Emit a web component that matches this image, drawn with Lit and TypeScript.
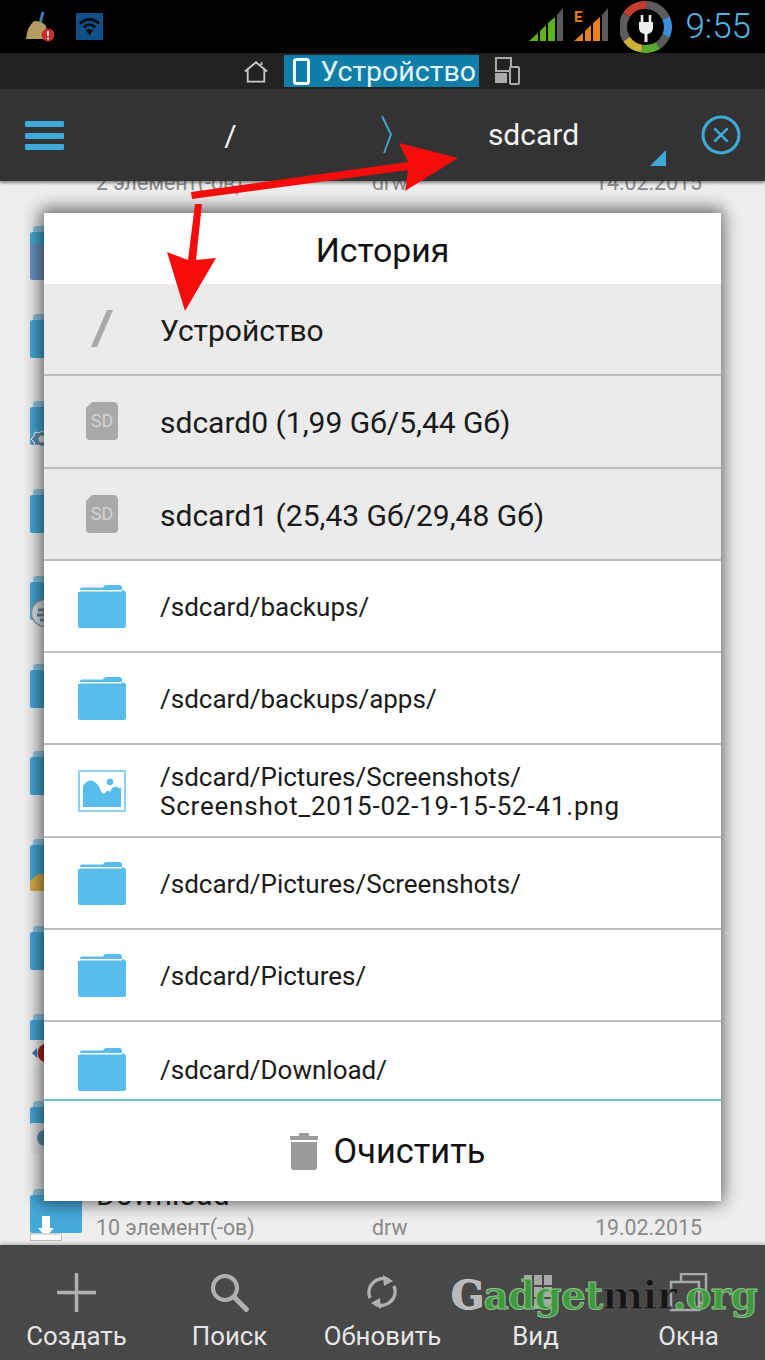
import { LitElement, html, css, svg } from "lit";
import { customElement } from "lit/decorators.js";

const folder = html`<svg viewBox="0 0 48 44" width="48" height="44"><path d="M2 5.5 Q2 3.5 4 3.5 H25 Q26 1 28 1 H41 Q44 1 44 3.5 V6 H2Z" fill="#58bdec"/><path d="M0 8 H2 V7.5 H44 V6 Q48 7 48 9 V42 Q48 44 46 44 H2 Q0 44 0 42Z" fill="#58bdec"/></svg>`;
const sd = html`<svg viewBox="0 0 32 38" width="32" height="38"><path d="M6 0 H27 Q32 0 32 5 V34 Q32 38 28 38 H4 Q0 38 0 34 V6Z" fill="#a9a9a9"/><text x="16" y="25" text-anchor="middle" font-family="Roboto, sans-serif" font-size="18" fill="#d2d2d2">SD</text></svg>`;
const slash = html`<svg viewBox="0 0 24 38" width="24" height="38"><path d="M17 0 H23 L7 37 H1Z" fill="#a9a9a9"/></svg>`;
const image = html`<svg viewBox="0 0 48 42" width="48" height="42"><rect x="1" y="1" width="46" height="40" fill="#fff" stroke="#8ed3ee" stroke-width="2"/><rect x="5" y="5" width="38" height="32" fill="#58bdec"/><path d="M5 16 Q10 9 15 11 Q20 13 23 21 Q25 26 28 22 Q30 19 32 22 Q34 16 39 17 Q42 19 43 17 V5 H5Z" fill="#fff"/><circle cx="32" cy="12" r="3.3" fill="#58bdec"/></svg>`;

const dlgRows = [
  { icon: slash, label: ["Устройство"], cls: "grey big" },
  { icon: sd, label: ["sdcard0 (1,99 Gб/5,44 Gб)"], cls: "grey big" },
  { icon: sd, label: ["sdcard1 (25,43 Gб/29,48 Gб)"], cls: "grey big" },
  { icon: folder, label: ["/sdcard/backups/"], cls: "" },
  { icon: folder, label: ["/sdcard/backups/apps/"], cls: "" },
  { icon: image, label: ["/sdcard/Pictures/Screenshots/", "Screenshot_2015-02-19-15-52-41.png"], cls: "" },
  { icon: folder, label: ["/sdcard/Pictures/Screenshots/"], cls: "" },
  { icon: folder, label: ["/sdcard/Pictures/"], cls: "" },
  { icon: folder, label: ["/sdcard/Download/"], cls: "" },
];

const bgIcon = (badge: unknown = null) => html`<div class="bgicon"><svg viewBox="0 0 52 45" width="52" height="45"><path d="M3 4 Q3 1 6 1 H46 Q49 1 49 4 V8 H3Z" fill="#8fc9e3"/><path d="M0 9 Q0 7 3 7 H49 Q52 7 52 9 V43 Q52 45 50 45 H2 Q0 45 0 43Z" fill="#45a9d8"/></svg>${badge}</div>`;

const badges: Record<number, unknown> = {
  1: html`<svg class="b tall" width="52" height="36" viewBox="0 0 52 36"><path d="M0 0 H52 V34 Q52 36 50 36 H2 Q0 36 0 34Z" fill="#6b93c2"/></svg>`,
  3: html`<svg class="b" width="24" height="23" viewBox="0 0 24 23"><path d="M12 1 l3 2 4-1 1 4 3 3-3 3-1 4-4-1-3 2-3-2-4 1-1-4-3-3 3-3 1-4 4 1Z" fill="#5f8fb0" stroke="#fff"/><circle cx="12" cy="9" r="3.5" fill="#eee"/></svg>`,
  5: html`<svg class="b" width="30" height="30" viewBox="0 0 30 30"><circle cx="15" cy="15" r="13.5" fill="#dfe6ea" stroke="#8a9aa3" stroke-width="1.5"/><path d="M8 12h14M7 17h16M10 22h10" stroke="#7d8c94" stroke-width="3"/></svg>`,
  8: html`<svg class="b" width="30" height="18" viewBox="0 0 30 18"><path d="M0 18 V8 L8 1 H30 V18Z" fill="#dcb04a"/></svg>`,
  10: html`<svg class="b" width="30" height="26" viewBox="0 0 30 26"><rect width="30" height="26" fill="#f3f3f3"/><circle cx="17" cy="13" r="9.5" fill="#b3251e"/><path d="M2 13 l5-5 v10Z" fill="#2a7fbf"/></svg>`,
  11: html`<svg class="b" width="34" height="30" viewBox="0 0 34 30"><rect width="34" height="30" rx="2" fill="#e6e6e6"/><circle cx="15" cy="15" r="8" fill="#5a93b3"/></svg>`,
  12: html`<svg class="b" width="34" height="26" viewBox="0 0 34 26"><path d="M8 13 H12 V1 H20 V13 H24 L16 22Z" fill="#fff"/><rect x="0.5" y="19" width="31" height="6.5" fill="#fff" stroke="#bbb"/></svg>`,
};

const bgRows: Array<{ title: string; sub?: string[] }> = [{ title: "", sub: ["2 элемент(-ов)", "drw", "14.02.2015"] }];
for (let i = 0; i < 11; i++) bgRows.push({ title: "" });
bgRows.push({ title: "Download", sub: ["10 элемент(-ов)", "drw", "19.02.2015"] });

const toolIcons = [
  svg`<path d="M19.5 0 V39 M0 19.5 H39" stroke="#b0b0b0" stroke-width="3.5" fill="none"/>`,
  svg`<circle cx="15" cy="15" r="12" stroke="#b0b0b0" stroke-width="4" fill="none"/><path d="M24 24 L38 38" stroke="#b0b0b0" stroke-width="5" fill="none"/>`,
  svg`<path d="M7 25 A14 14 0 0 1 26 7 M31 13 A14 14 0 0 1 12 31" stroke="#b0b0b0" stroke-width="3.5" fill="none"/><path d="M20 2 L30 8 L21 13Z M18 36 L8 30 L17 25Z" fill="#b0b0b0"/>`,
  svg`<path d="M8 2 H16 V12 H8Z M18 2 H26 V12 H18Z M28 2 H36 V12 H28Z M8 14 H16 V24 H8Z M18 14 H26 V24 H18Z M28 14 H36 V24 H28Z M8 26 H16 V36 H8Z M18 26 H26 V36 H18Z M28 26 H36 V36 H28Z" fill="#a8a8a8"/>`,
  svg`<path d="M12 9 V1 H37 V30 H30 M2 9 H30 V37 H2Z" stroke="#a8a8a8" stroke-width="2.5" fill="none"/>`,
];
const tools = ["Создать", "Поиск", "Обновить", "Вид", "Окна"];

@customElement("app-root")
export class AppRoot extends LitElement {
  static styles = css`
    :host { display: block; position: relative; width: 765px; height: 1360px; overflow: hidden; font-family: Roboto, "Noto Sans", sans-serif; background: #eee; }
    .page { display: flex; flex-direction: column; height: 1360px; }
    .status { height: 53px; background: #000; display: flex; align-items: center; padding: 0 14px 0 24px; flex: none; }
    .status .left { display: flex; gap: 22px; align-items: center; flex: 1; }
    .status .right { display: flex; align-items: center; }
    .sig { margin: -5px 0 0 10px; }
    .sig.first { margin-left: 0; }
    .plug { margin-left: 11px; }
    .time { color: #55b5e0; font-size: 35px; font-weight: 300; margin-left: 13px; }
    .tabs { height: 36px; background: #222; display: flex; justify-content: center; align-items: center; flex: none; gap: 16px; padding-right: 2px; }
    .tab { height: 32px; width: 195px; background: #0f7fa8; color: #e8f4f8; font-size: 28.5px; display: flex; align-items: center; gap: 11px; padding-left: 9px; box-sizing: border-box; white-space: nowrap; }
    .path { height: 92px; background: #333; display: flex; align-items: center; flex: none; position: relative; box-shadow: 0 2px 3px rgba(0,0,0,.45); z-index: 1; padding: 0 24px 0 25px; }
    .ham, .close { flex: none; }
    .seg { color: #f2f2f2; font-size: 30px; }
    .crumb { position: relative; flex: 1; display: flex; align-items: center; height: 100%; }
    .root { width: 317px; text-align: center; padding-left: 16px; box-sizing: border-box; }
    .chev { flex: none; margin-top: -2px; }
    .sdcard { flex: 1; text-align: center; padding-right: 26px; margin-top: -2px; }
    .corner { position: absolute; left: 650px; top: 61px; }
    .list { flex: 1; min-height: 0; overflow: hidden; display: flex; flex-direction: column; justify-content: flex-end; background: #eeeeee; }
    .row { height: 87.5px; flex: none; display: flex; align-items: flex-start; padding: 0 63px 0 30px; box-sizing: border-box; position: relative; }
    .row.first .bgicon { visibility: hidden; }
    .row.first .rowtext { padding-top: 27px; }
    .bgicon { width: 51px; height: 45px; position: relative; margin-top: 30px; flex: none; }
    .bgicon svg { display: block; }
    .b { position: absolute; left: 0; bottom: -8px; }
    .b.tall { bottom: -10px; }
    .rowtext { flex: 1; margin-left: 15px; padding-top: 22px; min-width: 0; }
    .title { height: 30px; line-height: 30px; font-size: 30px; color: #222; }
    .sub { display: flex; color: #8a8a8a; font-size: 21.3px; line-height: 28px; margin-top: 4px; white-space: nowrap; }
    .sub span:nth-child(1) { width: 276px; flex: none; }
    .sub span:nth-child(3) { flex: 1; text-align: right; }
    .tools { height: 115px; background: #484848; display: flex; flex: none; box-shadow: 0 -2px 3px rgba(0,0,0,.2); z-index: 1; box-sizing: border-box; }
    .tool { flex: 1; display: flex; flex-direction: column; align-items: center; color: #e6e6e6; font-size: 25.8px; padding-top: 28px; gap: 9px; }
    .tool svg { display: block; }

    .dialog { position: absolute; left: 44px; top: 213px; width: 677px; height: 988px; background: #fff; display: flex; flex-direction: column; box-shadow: -1px -1px 16px 3px rgba(0,0,0,.6); z-index: 2; }
    .dh { height: 71px; flex: none; display: flex; align-items: center; justify-content: center; font-size: 33.8px; color: #111; padding-top: 3px; box-sizing: border-box; }
    .drows { flex: 1; min-height: 0; overflow: hidden; }
    .drow { height: 92.3px; box-sizing: border-box; display: flex; align-items: center; border-bottom: 2px solid #bcbcbc; color: #1a1a1a; font-size: 26px; line-height: 29px; }
    .drow:last-child { border-bottom: 0; }
    .drow.grey { background: #ebebeb; }
    .drow.big { font-size: 30px; }
    .dicon { width: 116px; flex: none; display: flex; justify-content: center; box-sizing: border-box; }
    .dtext { padding-top: 3px; white-space: nowrap; }
    .dtext .l1 { display: block; }
    .dtext .l1 + .l1 { letter-spacing: .78px; }
    .df { height: 102px; flex: none; border-top: 2px solid #6fc3dc; box-sizing: border-box; display: flex; align-items: center; justify-content: center; gap: 16px; font-size: 34.4px; color: #111; padding-left: 10px; }
    .overlay { position: absolute; left: 0; top: 0; z-index: 3; pointer-events: none; }
    .mark { position: absolute; left: 451px; top: 1272px; z-index: 3; font-family: "DejaVu Serif", serif; font-weight: 700; font-size: 39px; letter-spacing: -.8px; color: #3f9a3f; white-space: nowrap; -webkit-text-stroke: 1px #8cc28c; }
    .mark .g { color: #b8b8b8; -webkit-text-stroke: 1px #c8c8c8; }
    .mark .k { color: #161616; -webkit-text-stroke: 1px #555; }
  `;

  render() {
    return html`
      <div class="page">
        <div class="status">
          <div class="left">
            <svg width="30" height="30" viewBox="0 0 30 30"><path d="M19 0 L16 12" stroke="#3a7fb5" stroke-width="3"/><path d="M10 9 Q18 9 22 14 L24 27 H2 Q3 15 10 9Z" fill="#b59a62"/><circle cx="24" cy="23" r="6.5" fill="#c4302b"/><path d="M24 19 V24 M24 25.5 V27.5" stroke="#fff" stroke-width="1.6"/></svg>
            <svg width="27" height="27" viewBox="0 0 28 28"><rect width="28" height="28" fill="#12508a"/><g fill="none" stroke="#0b0f14" stroke-width="3"><path d="M4 11 Q14 2 24 11"/><path d="M8 15 Q14 9 20 15"/></g><path d="M14 23 L10 18 Q14 15 18 18Z" fill="#0b0f14"/></svg>
          </div>
          <div class="right">
            <svg class="sig first" width="35" height="33" viewBox="0 0 35 33"><g fill="#5cb31f"><path d="M0 33 L9 25 V33Z"/><path d="M11 23 L17 17 V33 H11Z"/><path d="M19 15 L26 9 V33 H19Z"/></g><path d="M28 7 L34 0 V33 H28Z" fill="#5a5a5a"/></svg>
            <svg class="sig" width="35" height="33" viewBox="0 0 35 33"><g fill="#e8801f"><path d="M0 33 L9 25 V33Z"/><path d="M11 23 L17 17 V33 H11Z"/><path d="M19 15 L26 9 V33 H19Z"/></g><path d="M28 7 L34 0 V33 H28Z" fill="#5a5a5a"/><text x="0" y="14" fill="#e8801f" font-family="Roboto" font-weight="700" font-size="15">E</text></svg>
            <svg class="plug" width="52" height="52" viewBox="0 0 52 52"><g fill="none" stroke-width="8"><path d="M6.5 14 A22 22 0 0 1 26 4" stroke="#c43c2e"/><path d="M26 4 A22 22 0 0 1 46 17" stroke="#5c5c5c"/><path d="M46 17 A22 22 0 0 1 46 35" stroke="#3d8fd9"/><path d="M46 35 A22 22 0 0 1 38 44.5" stroke="#5c5c5c"/><path d="M38 44.5 A22 22 0 0 1 22 47.6" stroke="#5aa832"/><path d="M22 47.6 A22 22 0 0 1 6.5 38" stroke="#c9b13a"/><path d="M6.5 38 A22 22 0 0 1 6.5 14" stroke="#5c5c5c"/></g><path d="M22 14 V21 M30 14 V21" stroke="#eee" stroke-width="2.6"/><path d="M19 21 H33 V27 Q33 32 27.5 33 V41 H24.5 V33 Q19 32 19 27Z" fill="#eee"/></svg>
            <span class="time">9:55</span>
          </div>
        </div>
        <div class="tabs">
          <svg width="24" height="23" viewBox="0 0 26 24"><path d="M1 12 L13 2 L25 12 M4 10 V23 H22 V10 M19 5 V2" fill="none" stroke="#c9c9c9" stroke-width="2"/></svg>
          <div class="tab"><svg width="17" height="27" viewBox="0 0 17 27"><rect x="1.5" y="1.5" width="14" height="24" rx="2" fill="none" stroke="#fff" stroke-width="3"/></svg>Устройство</div>
          <svg width="25" height="28" viewBox="0 0 25 28"><rect x="1" y="1" width="15" height="13" fill="none" stroke="#aaa" stroke-width="2"/><rect x="0" y="16" width="12" height="10" fill="#aaa"/><rect x="15" y="10" width="9" height="17" rx="1" fill="#222" stroke="#aaa" stroke-width="2"/></svg>
        </div>
        <div class="path">
          <svg class="ham" width="39" height="29" viewBox="0 0 39 29"><g fill="#3fa9dc"><rect width="39" height="6" rx="1"/><rect y="12" width="39" height="6" rx="1"/><rect y="23" width="39" height="6" rx="1"/></g></svg>
          <div class="crumb">
            <span class="seg root">/</span>
            <svg class="chev" width="11" height="37" viewBox="0 0 11 37"><path d="M1 0 L10 18.5 L3 37" fill="none" stroke="#3fa9dc" stroke-width="1.8"/></svg>
            <span class="seg sdcard">sdcard</span>
          </div>
          <svg class="close" width="40" height="40" viewBox="0 0 39 39"><circle cx="19.5" cy="19.5" r="17.5" fill="none" stroke="#3fa9dc" stroke-width="3"/><path d="M13 13 L26 26 M26 13 L13 26" stroke="#3fa9dc" stroke-width="2.6"/></svg>
          <svg class="corner" width="16" height="16" viewBox="0 0 16 16"><path d="M16 0 V16 H0Z" fill="#3fa9dc"/></svg>
        </div>
        <div class="list">
          ${bgRows.map((r, i) => html`<div class="row ${i === 0 ? "first" : ""}">${bgIcon(badges[i])}${r.sub ? html`<div class="rowtext"><div class="title">${r.title}</div><div class="sub">${r.sub.map((s) => html`<span>${s}</span>`)}</div></div>` : null}</div>`)}
        </div>
        <div class="tools">
          ${tools.map((t, i) => html`<div class="tool"><svg width="39" height="39" viewBox="0 0 39 39">${toolIcons[i]}</svg><span>${t}</span></div>`)}
        </div>
      </div>

      <div class="dialog">
        <div class="dh">История</div>
        <div class="drows">
          ${dlgRows.map((r) => html`<div class="drow ${r.cls}"><div class="dicon">${r.icon}</div><div class="dtext">${r.label.map((l) => html`<span class="l1">${l}</span>`)}</div></div>`)}
        </div>
        <div class="df">
          <svg width="28" height="37" viewBox="0 0 28 37"><path d="M9 0 H19 V3 H28 V7 H0 V3 H9Z M1 9 H27 V34 Q27 37 24 37 H4 Q1 37 1 34Z" fill="#9a9a9a"/></svg>
          <span>Очистить</span>
        </div>
      </div>

      <svg class="overlay" width="765" height="1360" viewBox="0 0 765 1360">
        <path d="M191 192 L408 162 L399 143 L458 158 L405 191 L408 170 L192 199Z" fill="#f70c0c"/>
        <path d="M195 204 H202 L196 260 L216 258 L185 311 L167 252 L188 260Z" fill="#f70c0c"/>
      </svg>
      <div class="mark"><span class="g">G</span>adget<span class="k">mir</span>.org</div>
    `;
  }
}
